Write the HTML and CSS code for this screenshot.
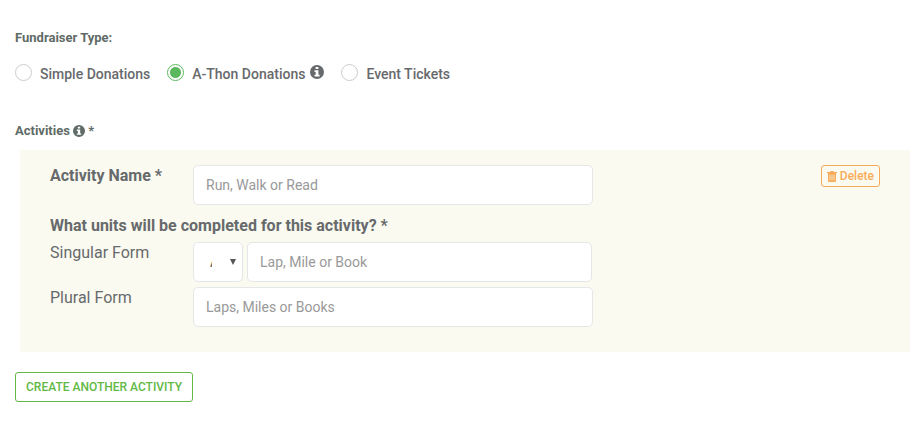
FILE: index.html
```html
<!DOCTYPE html>
<html lang="en">
<head>
<meta charset="utf-8">
<meta name="viewport" content="width=device-width, initial-scale=1">
<title>Fundraiser activities</title>
<link rel="stylesheet" href="styles.css">
</head>
<body>
<svg class="sprite" aria-hidden="true">
  <symbol id="info" viewBox="0 0 14 14">
    <path fill-rule="evenodd" d="M7 0a7 7 0 1 0 0 14A7 7 0 0 0 7 0zM5.600 2h2.800v2H5.600zM4.500 5.200h3.900v4.600h1.200v1.700H4.500V9.800h1.200V6.900H4.500z"/>
  </symbol>
  <symbol id="trash" viewBox="0 0 10 11">
    <path fill-rule="evenodd" d="M3 1 3.400.3Q3.600 0 4 0h2q.4 0 .6.300L7 1h3v1.200H9V10q0 1-1 1H2q-1 0-1-1V2.200H0V1zM2.600 3.800v5.400h.7V3.800zM4.650 3.800v5.400h.7V3.800zM6.700 3.800v5.400h.7V3.800z"/>
  </symbol>
</svg>
<form class="page">
  <fieldset class="types">
    <legend class="title">Fundraiser Type:</legend>
    <div class="options">
      <label class="option"><input type="radio" name="type"><span>Simple Donations</span></label>
      <label class="option"><input type="radio" name="type" checked><span>A-Thon Donations</span><svg class="info"><use href="#info"/></svg></label>
      <label class="option"><input type="radio" name="type"><span>Event Tickets</span></label>
    </div>
  </fieldset>

  <h2 class="title activities">Activities <svg class="info-small"><use href="#info"/></svg> *</h2>

  <section class="panel">
    <div class="row">
      <label class="name strong" for="activity">Activity Name *</label>
      <input class="field" id="activity" type="text" placeholder="Run, Walk or Read">
      <button class="delete" type="button"><svg class="trash"><use href="#trash"/></svg>Delete</button>
    </div>
    <p class="question strong">What units will be completed for this activity? *</p>
    <div class="row">
      <label class="name" for="singular">Singular Form</label>
      <div class="unit">
        <span class="picker">
          <select class="article" aria-label="Article"><option>A</option><option>An</option></select>
        </span>
        <input class="field" id="singular" type="text" placeholder="Lap, Mile or Book">
      </div>
    </div>
    <div class="row">
      <label class="name" for="plural">Plural Form</label>
      <input class="field" id="plural" type="text" placeholder="Laps, Miles or Books">
    </div>
  </section>

  <button class="create" type="button">CREATE ANOTHER ACTIVITY</button>
</form>
</body>
</html>
```
FILE: styles.css
```css
* { box-sizing: border-box; }

body {
  margin: 0;
  background: #fff;
  color: #676a6c;
  font: 16px/22px Roboto, sans-serif;
}

input, select, button { font-family: inherit; }

.sprite {
  position: absolute;
  width: 0;
  height: 0;
}

.page { padding: 28px 11px 23px 15px; }

.types {
  margin: 0;
  padding: 0;
  border: 0;
}

.title {
  margin: 0;
  padding: 0;
  color: #5f6b66;
  font-size: 13px;
  font-weight: 700;
  line-height: 20px;
}

.options {
  display: flex;
  gap: 17px;
  padding-top: 13px;
}

.option {
  display: flex;
  align-items: center;
  font-size: 14px;
  font-weight: 500;
  line-height: 22px;
}

.option span { padding-top: 2px; }

.option input {
  appearance: none;
  width: 17px;
  height: 17px;
  margin: 0 8px 2px 0;
  border: 1px solid #ccc;
  border-radius: 50%;
  background: #fff;
}

.option input:checked {
  border-color: #5cb85c;
  background: radial-gradient(circle, #5cb85c 5px, #fff 6px);
}

.info {
  width: 14px;
  height: 14px;
  margin: 0 0 2px 5px;
  fill: currentColor;
}

.info-small {
  width: 12px;
  height: 12px;
  vertical-align: -2px;
  fill: currentColor;
}

.activities { margin-top: 36px; }

.panel {
  display: flex;
  flex-direction: column;
  gap: 5px;
  margin: 9px 0 20px 5px;
  padding: 15px 30px 25px;
  background: #fafaf0;
}

.row {
  display: flex;
  align-items: flex-start;
}

.name { flex: 0 0 143px; }

.strong { font-weight: 700; }

.question {
  margin: 5px 0 0;
}

.field {
  flex: 0 1 400px;
  min-width: 0;
  height: 40px;
  padding: 6px 12px;
  border: 1px solid #e5e6e7;
  border-radius: 5px;
  background: #fff;
  color: #676a6c;
  font-size: 14px;
}

.field::placeholder {
  color: #999;
  opacity: 1;
}

.unit {
  display: flex;
  flex: 0 1 399px;
  gap: 4px;
  min-width: 0;
}

.unit .field { flex: 1; }

.picker {
  position: relative;
  flex: 0 0 50px;
}

.picker::after {
  content: "";
  position: absolute;
  top: 17px;
  right: 7px;
  border: 3px solid transparent;
  border-top: 6px solid #555;
  border-bottom: 0;
  pointer-events: none;
}

.article {
  appearance: none;
  display: block;
  width: 100%;
  height: 40px;
  padding: 6px 30px 6px 16px;
  border: 1px solid #e5e6e7;
  border-radius: 5px;
  background: #fff;
  color: #555;
  font-size: 14px;
}

.delete {
  display: flex;
  align-items: center;
  gap: 3px;
  height: 22px;
  margin-left: auto;
  padding: 0 5px;
  border: 1px solid #f8ac59;
  border-radius: 3px;
  background: transparent;
  color: #f8ac59;
  font-size: 12px;
  font-weight: 500;
}

.trash {
  width: 10px;
  height: 11px;
  fill: currentColor;
}

.create {
  display: block;
  height: 30px;
  padding: 0 10px;
  border: 1px solid #62b946;
  border-radius: 3px;
  background: #fff;
  color: #62b946;
  font-size: 12px;
  font-weight: 500;
}
```
